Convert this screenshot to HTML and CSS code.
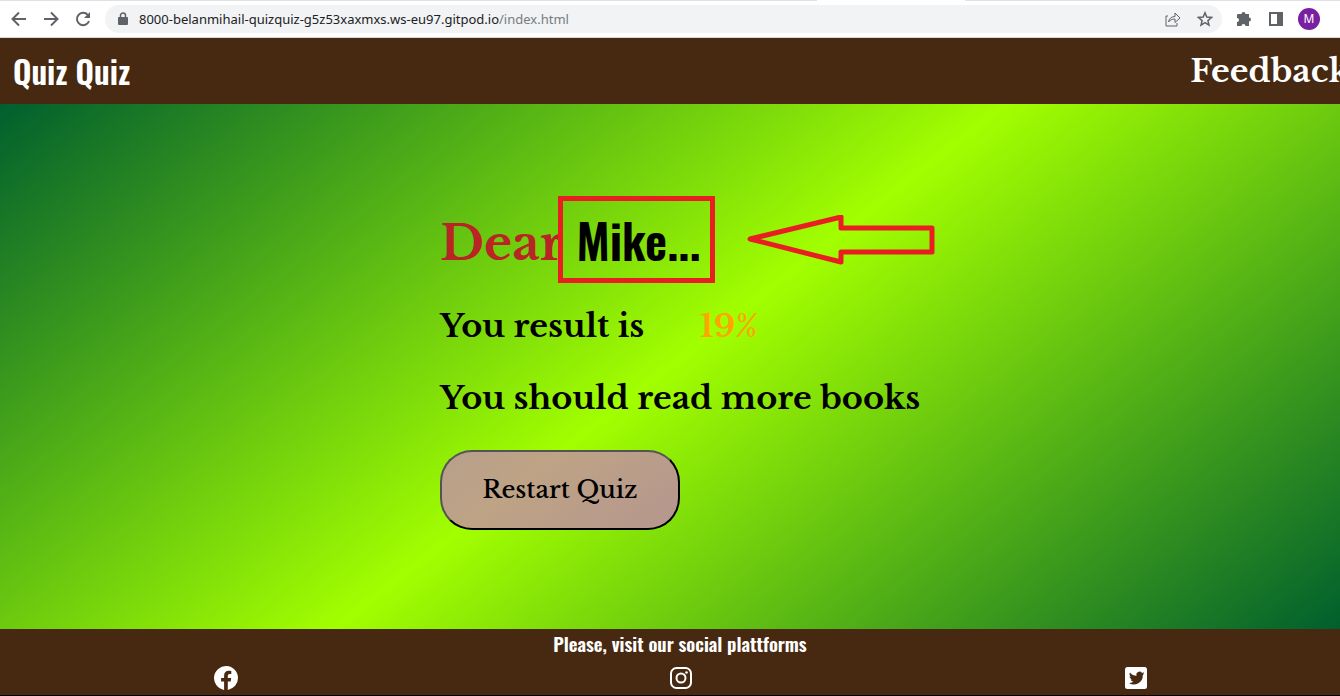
FILE: index.html
```html
<!DOCTYPE html>
<html lang="en">
<head>
<meta charset="utf-8">
<meta name="viewport" content="width=device-width, initial-scale=1">
<title>Quiz Quiz</title>
<link rel="stylesheet" href="styles.css">
</head>
<body>
<div class="toolbar">
  <div class="tab-edge"><span class="tab-active"></span></div>
  <button class="tool" aria-label="Back"><svg width="16" height="16" viewBox="0 0 16 16"><path d="M15 8H2M8 1.500 1.500 8 8 14.500"/></svg></button>
  <button class="tool" aria-label="Forward"><svg width="16" height="16" viewBox="0 0 16 16"><path d="M1 8h13M8 1.500 14.500 8 8 14.500"/></svg></button>
  <button class="tool" aria-label="Reload"><svg width="16" height="16" viewBox="0 0 16 16"><path d="M14 10A6.200 6.200 0 1 1 12.800 3.800"/><path class="solid" d="M15 1v6H9z"/></svg></button>
  <div class="address">
    <svg class="lock" width="10" height="14" viewBox="0 0 10 14"><path class="solid" d="M1 5h8q1 0 1 1v6q0 1-1 1H1q-1 0-1-1V6q0-1 1-1z"/><path d="M2.500 5V3.500a2.500 2.500 0 0 1 5 0V5" stroke-width="1.500"/></svg>
    <a class="url" href="#">8000-belanmihail-quizquiz-g5z53xaxmxs.ws-eu97.gitpod.io<span class="path">/index.html</span></a>
    <button class="tool" aria-label="Share"><svg class="thin" width="16" height="16" viewBox="0 0 16 16"><path d="M3 5H1v10h11v-3M3.500 11C4 7.500 6.500 5.500 10 5.500V2l5 5-5 4.500V8C7 8 5 9 3.500 11z"/></svg></button>
    <button class="tool" aria-label="Bookmark"><svg class="star" width="16" height="16" viewBox="0 0 16 16"><path d="m8 1.800 1.800 4.300 4.700.4-3.600 3.100 1.100 4.600L8 11.700l-4 2.500 1.100-4.600-3.600-3.100 4.700-.4z"/></svg></button>
  </div>
  <button class="tool" aria-label="Extensions"><svg width="16" height="16" viewBox="0 0 16 16"><path class="solid" d="M2 3h3.500a2 2 0 0 1 4 0H13v3.500a2 2 0 0 1 0 4V15H9.500a2 2 0 0 0-4 0H1v-4a2 2 0 0 0 0-4V4q0-1 1-1z"/></svg></button>
  <button class="tool" aria-label="Side panel"><svg width="16" height="16" viewBox="0 0 16 16"><path d="M2 2h12v12H2z"/><path class="solid" d="M9 2h5v12H9z"/></svg></button>
  <button class="avatar" aria-label="Profile">M</button>
</div>
<header class="header">
  <a class="brand" href="#">Quiz Quiz</a>
  <a class="feedback" href="#">Feedback</a>
</header>
<main class="main">
  <section class="result">
    <h1 class="greeting"><span class="dear">Dear</span><span class="name">Mike...</span>
      <svg class="arrow" width="188" height="50" viewBox="0 0 188 50"><path d="M3 24 94 2v11h91v24H94v10z"/></svg>
    </h1>
    <p class="line">You result is <span class="score">19%</span></p>
    <p class="line">You should read more books</p>
    <button class="restart">Restart Quiz</button>
  </section>
</main>
<footer class="footer">
  <h2 class="social-title">Please, visit our social plattforms</h2>
  <nav class="social">
    <a href="#" aria-label="Facebook"><svg width="24" height="24" viewBox="0 0 24 24"><path fill="#fff" d="M24 12a12 12 0 1 0-13.900 11.900v-8.400h-3V12h3V9.400c0-3 1.800-4.700 4.500-4.700 1.300 0 2.700.2 2.700.2v3h-1.500c-1.500 0-2 .9-2 1.900V12h3.400l-.5 3.500h-2.900v8.400A12 12 0 0 0 24 12z"/></svg></a>
    <a href="#" aria-label="Instagram"><svg width="24" height="24" viewBox="0 0 24 24" fill="none" stroke="#fff" stroke-width="2"><rect x="2" y="2" width="20" height="20" rx="5.500"/><circle cx="12" cy="12" r="4.500"/><circle cx="17.500" cy="6.500" r="1.300" fill="#fff" stroke="none"/></svg></a>
    <a href="#" aria-label="Twitter"><svg width="24" height="24" viewBox="0 0 24 24"><rect x="1" y="1" width="22" height="22" rx="2.500" fill="#fff"/><path fill="#472911" d="M18.600 7.800c.7-.4 1.100-1 1.400-1.700-.6.400-1.300.6-2 .8a3.100 3.100 0 0 0-5.400 2.900A8.900 8.900 0 0 1 6 6.500a3.200 3.200 0 0 0 1 4.200c-.5 0-1-.2-1.400-.4 0 1.500 1.100 2.800 2.500 3.100-.4.100-.9.100-1.400 0 .4 1.300 1.600 2.200 3 2.200A6.400 6.400 0 0 1 5 17a9 9 0 0 0 13.800-8c.6-.5 1.100-1 1.500-1.700-.5.300-1.100.4-1.700.5z"/></svg></a>
  </nav>
</footer>
</body>
</html>
```
FILE: styles.css
```css
* { box-sizing: border-box; }
body {
  margin: 0;
  min-height: 100vh;
  display: flex;
  flex-direction: column;
  overflow-x: hidden;
  font-family: "Libre Baskerville", "Liberation Serif", serif;
  color: #000;
}
a { color: inherit; text-decoration: none; }
button { font: inherit; color: inherit; cursor: pointer; }
svg { display: block; flex: none; }

.toolbar {
  position: relative;
  display: flex;
  align-items: center;
  gap: 16px;
  height: 38px;
  padding: 0 20px 0 11px;
  background: #fff;
  border-bottom: 1px solid #dcd8d5;
  font-family: "Noto Sans", "Open Sans", sans-serif;
}
.tab-edge {
  position: absolute;
  inset: 0 0 auto;
  height: 1px;
  background: #dee1e6;
}
.tab-active {
  display: block;
  width: 11%;
  height: 1px;
  margin-left: 61%;
  background: #fff;
}
.tool { padding: 0; border: 0; background: none; }
.toolbar svg { fill: none; stroke: #5f6368; stroke-width: 2; }
.toolbar .solid { fill: #5f6368; stroke: none; }
.toolbar .thin { stroke-width: 1; }
.toolbar .star { stroke-width: 1.500; }
.address {
  flex: 1;
  display: flex;
  align-items: center;
  gap: 16px;
  height: 28px;
  margin: 0 -2px;
  padding: 0 9px 0 13px;
  border-radius: 14px;
  background: #f1f3f4;
}
.address .lock { margin-right: -5px; }
.url { flex: 1; font-size: 13px; color: #202124; }
.path { color: #777b80; }
.avatar {
  width: 22px;
  height: 22px;
  margin-left: -2px;
  padding: 0;
  border: 0;
  border-radius: 50%;
  background: #7b1fa2;
  color: #fff;
  font-size: 12px;
}

.header {
  display: flex;
  align-items: center;
  justify-content: space-between;
  height: 66px;
  padding-left: 13px;
  background: #472911;
  color: #fff;
}
.brand, .name, .social-title {
  font-family: "Oswald", "Liberation Sans Narrow", "Liberation Sans", sans-serif;
  font-weight: 600;
}
.brand { padding-bottom: 2px; font-size: 32px; }
.feedback { margin-right: -10px; font-size: 32px; font-weight: 700; }

.main {
  flex: 1;
  display: flex;
  justify-content: center;
  padding-top: 92px;
  background: linear-gradient(142deg, #005f2d, #a2ff00 50%, #005f2d);
}
.result { width: 480px; margin-left: 20px; }
.greeting {
  display: flex;
  align-items: center;
  height: 87px;
  margin: 0;
  white-space: nowrap;
}
.dear {
  flex: none;
  width: 118px;
  padding-top: 6px;
  overflow: hidden;
  font-size: 48px;
  font-weight: 700;
  color: #b92424;
}
.name {
  flex: none;
  display: grid;
  place-items: center;
  width: 157px;
  height: 87px;
  padding-left: 4px;
  border: 5px solid #e91e23;
  font-size: 48px;
}
.arrow { margin-left: 32px; fill: none; stroke: #e91e23; stroke-width: 5; stroke-linejoin: round; }
.line {
  margin: 0 0 24px;
  font-size: 32px;
  line-height: 48px;
  font-weight: 700;
  white-space: nowrap;
}
.greeting + .line { margin-top: 19px; }
.score { margin-left: 47px; color: #ffa500; }
.restart {
  width: 240px;
  height: 80px;
  margin-top: 4px;
  padding-bottom: 3px;
  border: 2px outset #000;
  border-radius: 32px;
  background: linear-gradient(142deg, #b79f8b, #bea385 35%, #b5968e);
  font-size: 24px;
  font-weight: 500;
}

.footer {
  height: 67px;
  background: #472911;
  border-bottom: 1px solid #000;
  color: #fff;
}
.social-title { margin: 0 0 0 20px; padding-bottom: 4px; font-size: 19px; line-height: 28px; text-align: center; }
.social { display: flex; justify-content: space-around; margin: 0 -24px 0 -2px; padding-top: 5px; }
```
